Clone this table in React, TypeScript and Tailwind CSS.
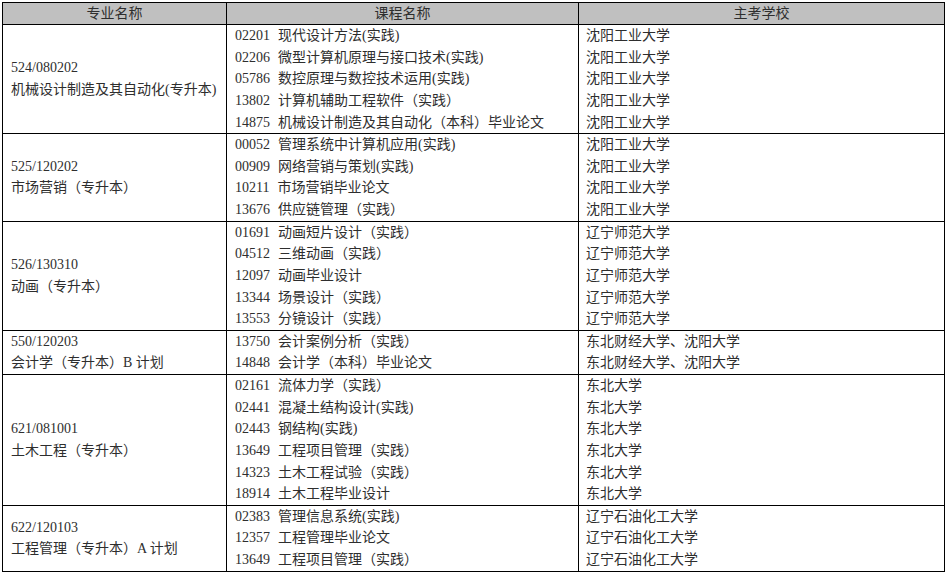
const groups = [
  {
    code: "524/080202",
    name: "机械设计制造及其自动化(专升本)",
    courses: [
      ["02201", "现代设计方法(实践)", "沈阳工业大学"],
      ["02206", "微型计算机原理与接口技术(实践)", "沈阳工业大学"],
      ["05786", "数控原理与数控技术运用(实践)", "沈阳工业大学"],
      ["13802", "计算机辅助工程软件（实践）", "沈阳工业大学"],
      ["14875", "机械设计制造及其自动化（本科）毕业论文", "沈阳工业大学"],
    ],
  },
  {
    code: "525/120202",
    name: "市场营销（专升本）",
    courses: [
      ["00052", "管理系统中计算机应用(实践)", "沈阳工业大学"],
      ["00909", "网络营销与策划(实践)", "沈阳工业大学"],
      ["10211", "市场营销毕业论文", "沈阳工业大学"],
      ["13676", "供应链管理（实践）", "沈阳工业大学"],
    ],
  },
  {
    code: "526/130310",
    name: "动画（专升本）",
    courses: [
      ["01691", "动画短片设计（实践）", "辽宁师范大学"],
      ["04512", "三维动画（实践）", "辽宁师范大学"],
      ["12097", "动画毕业设计", "辽宁师范大学"],
      ["13344", "场景设计（实践）", "辽宁师范大学"],
      ["13553", "分镜设计（实践）", "辽宁师范大学"],
    ],
  },
  {
    code: "550/120203",
    name: "会计学（专升本）B 计划",
    courses: [
      ["13750", "会计案例分析（实践）", "东北财经大学、沈阳大学"],
      ["14848", "会计学（本科）毕业论文", "东北财经大学、沈阳大学"],
    ],
  },
  {
    code: "621/081001",
    name: "土木工程（专升本）",
    courses: [
      ["02161", "流体力学（实践）", "东北大学"],
      ["02441", "混凝土结构设计(实践)", "东北大学"],
      ["02443", "钢结构(实践)", "东北大学"],
      ["13649", "工程项目管理（实践）", "东北大学"],
      ["14323", "土木工程试验（实践）", "东北大学"],
      ["18914", "土木工程毕业设计", "东北大学"],
    ],
  },
  {
    code: "622/120103",
    name: "工程管理（专升本）A 计划",
    courses: [
      ["02383", "管理信息系统(实践)", "辽宁石油化工大学"],
      ["12357", "工程管理毕业论文", "辽宁石油化工大学"],
      ["13649", "工程项目管理（实践）", "辽宁石油化工大学"],
    ],
  },
];

export default function App() {
  return (
    <div className="w-[947px] h-[576px] bg-white pl-[2px] pt-[2px] font-['Liberation_Serif','Noto_Sans_CJK_SC',serif] text-[14px] text-[#2e2e2e]">
      <div className="w-[943px] border border-black">
        {/* header */}
        <div className="flex h-[22px] bg-[#c0c0c0] border-b border-black leading-[21px]">
          <div className="w-[224px] border-r border-black text-center">专业名称</div>
          <div className="w-[352px] border-r border-black text-center">课程名称</div>
          <div className="flex-1 text-center">主考学校</div>
        </div>

        {groups.map((g, gi) => (
          <div
            key={g.code}
            className={gi < groups.length - 1 ? "flex border-b border-black" : "flex"}
          >
            <div className="w-[224px] border-r border-black flex flex-col justify-center pl-[8px] leading-[21.6px]">
              <div>{g.code}</div>
              <div className="whitespace-nowrap">{g.name}</div>
            </div>
            <div className="w-[352px] border-r border-black pl-[8px]">
              {g.courses.map((c, i) => (
                <div key={i} className="h-[21.64px] leading-[21.64px] whitespace-nowrap">
                  <span>{c[0]}</span>
                  <span className="ml-[8px]">{c[1]}</span>
                </div>
              ))}
            </div>
            <div className="flex-1 pl-[7px]">
              {g.courses.map((c, i) => (
                <div key={i} className="h-[21.64px] leading-[21.64px] whitespace-nowrap">
                  {c[2]}
                </div>
              ))}
            </div>
          </div>
        ))}
      </div>
    </div>
  );
}
